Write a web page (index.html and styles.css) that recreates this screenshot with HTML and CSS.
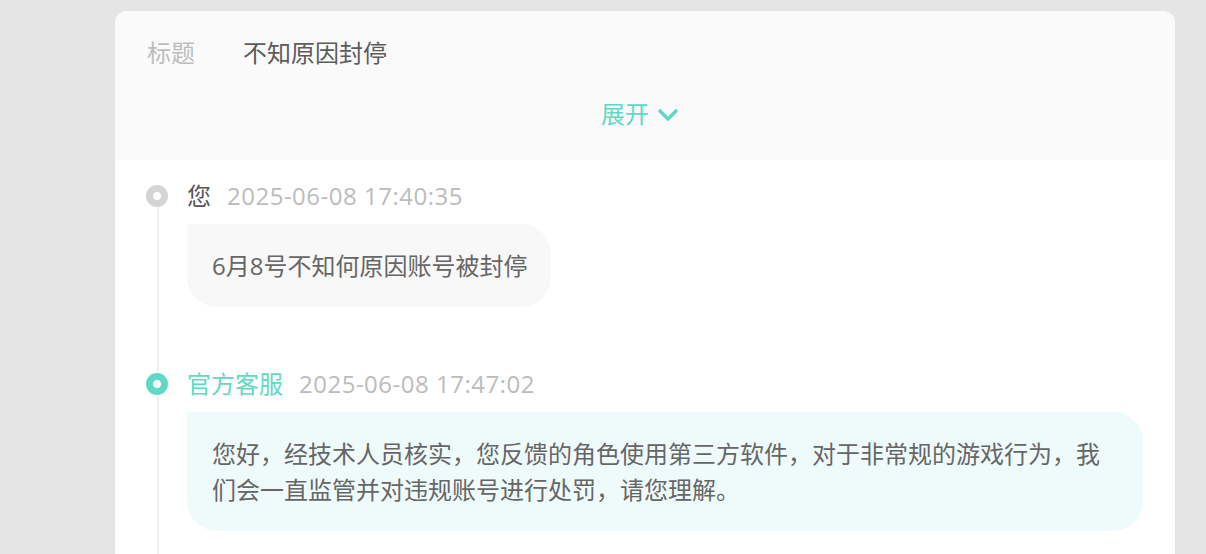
FILE: index.html
```html
<!DOCTYPE html>
<html lang="zh-CN">
<head>
<meta charset="utf-8">
<link rel="stylesheet" href="styles.css">
</head>
<body>
<div class="card">
  <div class="head">
    <div class="title-row">
      <span class="label">标题</span>
      <span class="title">不知原因封停</span>
    </div>
    <div class="expand">展开<svg class="chev" width="22" height="14" viewBox="0 0 22 14"><path d="M3 3 L11 11 L19 3" fill="none" stroke="#5fd9c5" stroke-width="3.6" stroke-linecap="round" stroke-linejoin="round"/></svg></div>
  </div>
  <div class="timeline">
    <div class="item">
      <div class="meta">
        <span class="dot"></span>
        <span class="name">您</span>
        <span class="time">2025-06-08 17:40:35</span>
      </div>
      <div class="bubble user">6月8号不知何原因账号被封停</div>
    </div>
    <div class="item">
      <div class="meta">
        <span class="dot active"></span>
        <span class="name staff">官方客服</span>
        <span class="time">2025-06-08 17:47:02</span>
      </div>
      <div class="bubble service">您好，经技术人员核实，您反馈的角色使用第三方软件，对于非常规的游戏行为，我们会一直监管并对违规账号进行处罚，请您理解。</div>
    </div>
  </div>
</div>
</body>
</html>
```
FILE: styles.css
```css
html, body {
  margin: 0;
  padding: 0;
  height: 100%;
  background: #e5e5e5;
  overflow: hidden;
}
body {
  font-family: "Open Sans", "Noto Sans CJK SC", sans-serif;
  font-size: 24px;
  color: #666;
}
.card {
  margin: 11px 0 0 115px;
  width: 1060px;
  height: calc(100vh - 11px);
  background: #fff;
  border-radius: 12px 12px 0 0;
  overflow: hidden;
}
.head {
  background: #fafafa;
  height: 149px;
  box-sizing: border-box;
  padding: 24px 32px 0;
}
.title-row {
  display: flex;
  align-items: center;
  height: 36px;
  line-height: 36px;
}
.label {
  color: #bdbdbd;
  width: 96px;
}
.title {
  color: #5c5c5c;
}
.expand {
  margin-top: 25px;
  display: flex;
  justify-content: center;
  align-items: center;
  gap: 8px;
  color: #5fd9c5;
  line-height: 36px;
  padding-right: 10px;
}
.chev {
  display: block;
  margin-top: 2px;
}
.timeline {
  position: relative;
  height: calc(100% - 149px);
  box-sizing: border-box;
  padding: 18px 32px 0 72px;
}
.timeline::before {
  content: "";
  position: absolute;
  left: 42px;
  top: 36px;
  bottom: 0;
  width: 2px;
  background: #efefef;
}
.item {
  margin-bottom: 59px;
}
.meta {
  position: relative;
  display: flex;
  align-items: center;
  height: 36px;
  line-height: 36px;
  gap: 16px;
}
.dot {
  position: absolute;
  left: -41px;
  top: 7px;
  width: 8px;
  height: 8px;
  border: 7px solid #d4d4d4;
  border-radius: 50%;
  background: #fff;
}
.dot.active {
  border-color: #5fd9c5;
}
.name {
  color: #555;
}
.name.staff {
  color: #5fd9c5;
}
.time {
  color: #bcbcbc;
  letter-spacing: 0.5px;
}
.bubble {
  margin-top: 10px;
  padding: 24px 24px 23px 25px;
  line-height: 36px;
  border-radius: 0 30px 30px 30px;
  color: #666;
}
.bubble.user {
  display: inline-block;
  background: #f8f8f8;
}
.bubble.service {
  background: #effbfb;
}
```
